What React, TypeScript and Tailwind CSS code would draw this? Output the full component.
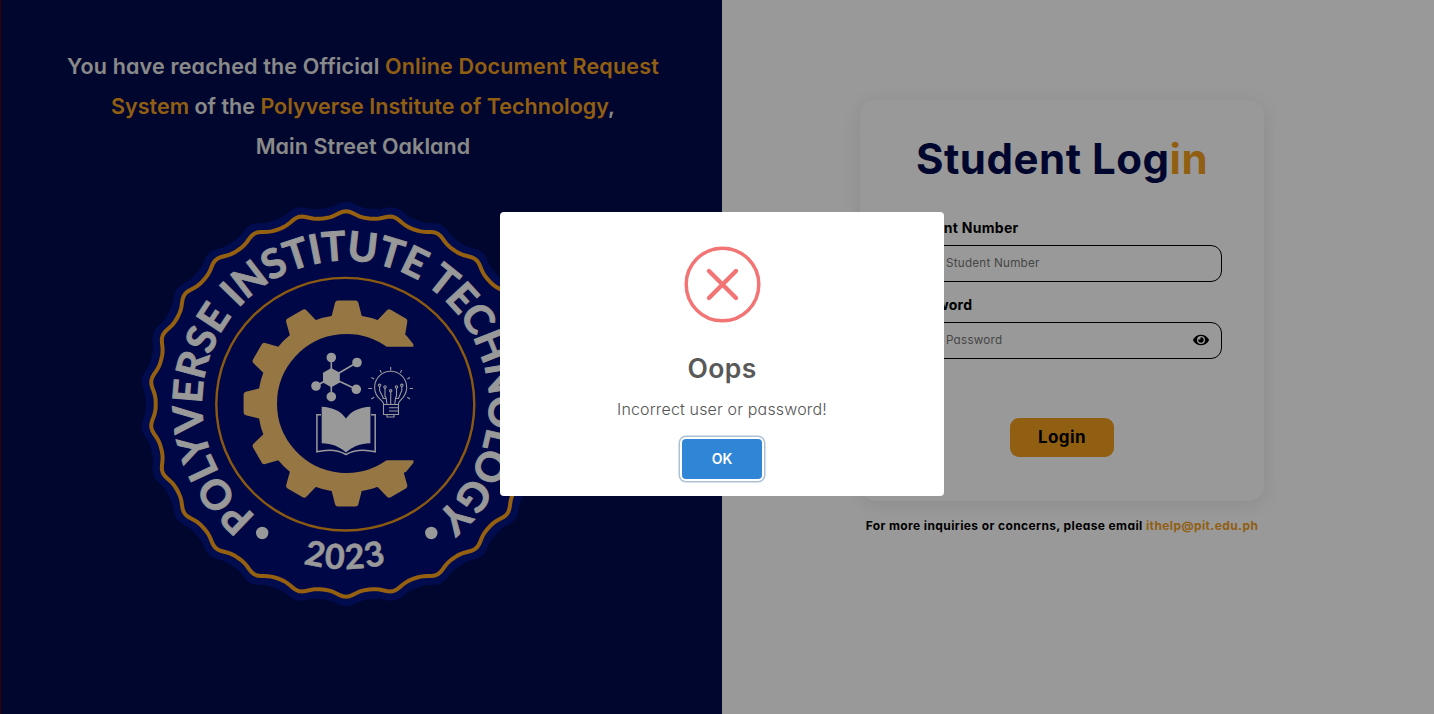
import React from "react";
import { FaEye } from "react-icons/fa";

const CX = 345.5;
const CY = 404;

function polar(cx: number, cy: number, r: number, deg: number, sx = 1) {
  const a = (deg * Math.PI) / 180;
  return `${(cx + sx * r * Math.sin(a)).toFixed(2)} ${(cy - r * Math.cos(a)).toFixed(2)}`;
}

function scallop(mean: number, amp: number) {
  const pts: string[] = [];
  for (let d = 0; d < 360; d += 1) {
    const w = (26 * d * Math.PI) / 180;
    const r = mean + amp * Math.cos(w) + 0.5 * Math.cos(2 * w);
    pts.push(polar(346, CY, r, d, 1.018));
  }
  return `M${pts.join("L")}Z`;
}

function gear() {
  const gx = 346.7;
  const gy = 403.5;
  let d = `M390 345.5L410.5 345.5L404 337.5`;
  for (let t = 30; t >= -210; t -= 30) {
    if (t !== 30) d += `A86 86 0 0 0 ${polar(gx, gy, 86, t + 8.4)}`;
    else d += `L${polar(gx, gy, 87, t + 9.4)}`;
    d += `L${polar(gx, gy, 100.5, t + 5)}L${polar(gx, gy, 100.5, t - 5)}`;
    d += `L${polar(gx, gy, 86, t - 8.4)}`;
  }
  d += `L404 469.5L410.5 461.5L390 461.5A72.5 72.5 0 1 1 390 345.5Z`;
  return d;
}

function Seal() {
  return (
    <svg className="block h-[430px] w-[430px]" viewBox="130 190 430 430">
      <path d={scallop(199, 2.8)} fill="#001481" />
      <path d={scallop(189.3, 2.9)} fill="#000c76" stroke="#f9a01b" strokeWidth="4" />
      <ellipse cx="345.3" cy="404.2" rx="129" ry="126.3" fill="none" stroke="#e8971c" strokeWidth="2.4" />
      <path id="seal-top" d={`M${polar(CX, CY, 143.5, -141.5)}A143.5 143.5 0 1 1 ${polar(CX, CY, 143.5, 143)}`} fill="none" />
      <path id="seal-bottom" d={`M${polar(CX, CY, 165, 220)}A165 165 0 0 0 ${polar(CX, CY, 165, 140)}`} fill="none" />
      <text
        className="font-['Lato'] text-[40.5px] font-bold"
        fill="#fff"
        stroke="#fff"
        strokeWidth="0.9"
        textLength="708"
        lengthAdjust="spacing"
      >
        <textPath href="#seal-top">
          <tspan className="tracking-[0.7px]">POLYVERSE </tspan>
          <tspan>INSTITUTE TECHNOLOGY</tspan>
        </textPath>
      </text>
      <text
        className="font-['Lato'] text-[34px] font-bold tracking-[1.6px]"
        fill="#fff"
        stroke="#fff"
        strokeWidth="0.5"
        textAnchor="middle"
      >
        <textPath href="#seal-bottom" startOffset="50%">2023</textPath>
      </text>
      <circle cx="262.2" cy="533" r="6.2" fill="#fff" />
      <circle cx="431.3" cy="533" r="6.2" fill="#fff" />
      <path d={gear()} fill="#fac56e" stroke="#fac56e" strokeWidth="6" strokeLinejoin="round" clipPath="url(#gear-cut)" />
      <clipPath id="gear-cut">
        <path d="M230 290H420V346.7H230ZM230 346.7H386V460.3H230ZM230 460.3H420V520H230Z" />
      </clipPath>

      <g stroke="#fff" strokeWidth="1.6" fill="#fff">
        <path d="M331.3 377.5V357.5M331.3 377.5L357 362.5M331.3 377.5L356.3 389.3M331.3 377.5V396.7M331.3 377.5L316 386" />
        <path d="M331.3 369L339 373.2V382L331.3 386.3L323.8 382V373.2Z" />
        <circle cx="331.3" cy="357.5" r="4" />
        <circle cx="357" cy="362.5" r="4" />
        <circle cx="356.3" cy="389.3" r="4" />
        <circle cx="331.3" cy="396.7" r="4" />
        <circle cx="316" cy="386" r="4" />
      </g>

      <g stroke="#fff" strokeWidth="1.1" fill="none">
        <path d="M383.5 404.5V403.5C383.5 402 380 399.6 377.8 396.8A16 16 0 1 1 403.5 396.8C401.2 399.6 398.5 402 398.5 403.5V414.5H383.5ZM383.5 404.5H398.5M389 407.7H398.5M389 411H398.5M387 414.5V417H394V414.5" />
        <path d="M390.7 404V391.8M387 404L386 397.5L385 396.3V388M383.5 398.5L379.6 390.5V386.5M394.8 404L395.6 397.5L396.5 396.3V388M398.4 398.5L401.8 390.5V386.5M382.5 398.5H386M396 398.5H399" />
        <circle cx="390.7" cy="390.8" r="1.2" />
        <circle cx="385" cy="387" r="1.2" />
        <circle cx="396.5" cy="387" r="1.2" />
        <circle cx="379.6" cy="385.3" r="1.2" />
        <circle cx="401.8" cy="385.3" r="1.2" />
        <path d="M390.7 367V370.5M380 370L381.4 372.7M401.8 370L400.3 372.7M371.3 377.5L374.2 379M410 377.5L407.3 379M368.3 388.5H372M409.7 388.5H413M371.3 399L374.2 397.2M410 399L407.3 397.2" />
      </g>

      <path d="M321.7 406.7C332 407 341 411 346 418.5C351 411 360 407 370.4 406.7V443.3C360 443.5 352 447 346 452.5C340 447 332 443.5 321.7 443.3Z" fill="#fff" />
      <path d="M321 414.8H316.9V451.8C328 449 339 450.5 346 454.5C353 450.5 364 449 375.2 451.8V414.8H371" fill="none" stroke="#fff" strokeWidth="1.5" />
    </svg>
  );
}

interface FieldProps {
  label: string;
  type: string;
  children?: React.ReactNode;
}

function Field({ label, type, children }: FieldProps) {
  return (
    <div className="flex flex-col">
      <label className="h-[24px] text-[14px] leading-[24px] font-bold tracking-[0.3px] text-black">{label}</label>
      <div className="mt-[5px] flex h-[37px] items-center rounded-[11px] border-[1.5px] border-black pr-[12px] pl-[43px]">
        <input
          type={type}
          placeholder={label}
          className="min-w-0 flex-1 bg-transparent pt-px text-[11.7px] tracking-[0.22px] outline-none placeholder:text-[#757575]"
        />
        {children}
      </div>
    </div>
  );
}

export default function App() {
  return (
    <div className="relative flex h-[714px] w-full overflow-hidden bg-white font-['Inter',sans-serif] [font-feature-settings:'cv11']">
      <section className="flex w-[722px] shrink-0 flex-col border-l border-[#600008] bg-[#000b4b]">
        <h1 className="mt-[46px] flex w-full flex-col items-center pl-[3px] text-[21.5px] leading-[40px] font-semibold whitespace-nowrap text-[#e6e6e6]">
          <span className="tracking-[0.17px]">
            You have reached the Official <span className="text-[#f29e1f]">Online Document Request</span>
          </span>
          <span className="tracking-[0.02px]">
            <span className="text-[#f29e1f]">System</span> of the{" "}
            <span className="text-[#f29e1f]">Polyverse Institute of Technology</span>,
          </span>
          <span className="tracking-[0.07px]">Main Street Oakland</span>
        </h1>
        <div className="mt-[24px] ml-[129px]">
          <Seal />
        </div>
      </section>

      <main className="flex flex-1 flex-col items-center pt-[100px] pr-[32px]">
        <form className="flex h-[401px] w-[404px] flex-col rounded-[16px] bg-white px-[42px] shadow-[0_3px_20px_rgba(0,0,0,0.09)]">
          <h2 className="mt-[28px] self-center text-[42px] leading-[62px] font-bold tracking-[0.5px] whitespace-nowrap text-[#000b4b]">
            Student Log<span className="text-[#f29e1f]">in</span>
          </h2>
          <div className="mt-[26px] flex flex-col gap-[11px]">
            <Field label="Student Number" type="text" />
            <Field label="Password" type="password">
              <FaEye className="mb-[2px] h-[16px] w-[16px] text-black" />
            </Field>
          </div>
          <button
            type="button"
            className="mt-[59px] h-[39px] w-[104px] self-center rounded-[9px] bg-[#f29e1f] text-[17px] font-bold tracking-[0.4px] text-black"
          >
            Login
          </button>
        </form>
        <p className="mt-[15px] text-[12px] leading-[20px] font-bold tracking-[0.39px] whitespace-nowrap text-black">
          For more inquiries or concerns, please email <span className="text-[#f29e1f]">ithelp@pit.edu.ph</span>
        </p>
      </main>

      <div className="absolute inset-0 flex justify-center bg-black/40 pt-[212px] pl-[10px]">
        <div role="dialog" className="flex h-[284px] w-[444px] flex-col items-center rounded-[4px] bg-white">
          <svg className="mt-[34px] h-[77px] w-[77px]" viewBox="0 0 77 77" fill="none" stroke="#f27474">
            <circle cx="38.5" cy="38.5" r="36.3" strokeWidth="3.5" />
            <path d="M25 25L52 52M52 25L25 52" strokeWidth="4.4" strokeLinecap="round" />
          </svg>
          <h3 className="mt-[25px] text-[26.5px] leading-[40px] font-semibold tracking-[0.4px] text-[#595959]">Oops</h3>
          <p className="mt-[9px] text-[16px] leading-[24px] font-light tracking-[0.16px] whitespace-nowrap text-[#545454]">
            Incorrect user or password!
          </p>
          <button
            type="button"
            className="mt-[17.5px] h-[40px] w-[80px] rounded-[4px] bg-[#2f85d6] text-[14px] font-semibold text-white shadow-[0_0_0_2px_#fff,0_0_0_3.5px_#adc1d5]"
          >
            OK
          </button>
        </div>
      </div>
    </div>
  );
}
